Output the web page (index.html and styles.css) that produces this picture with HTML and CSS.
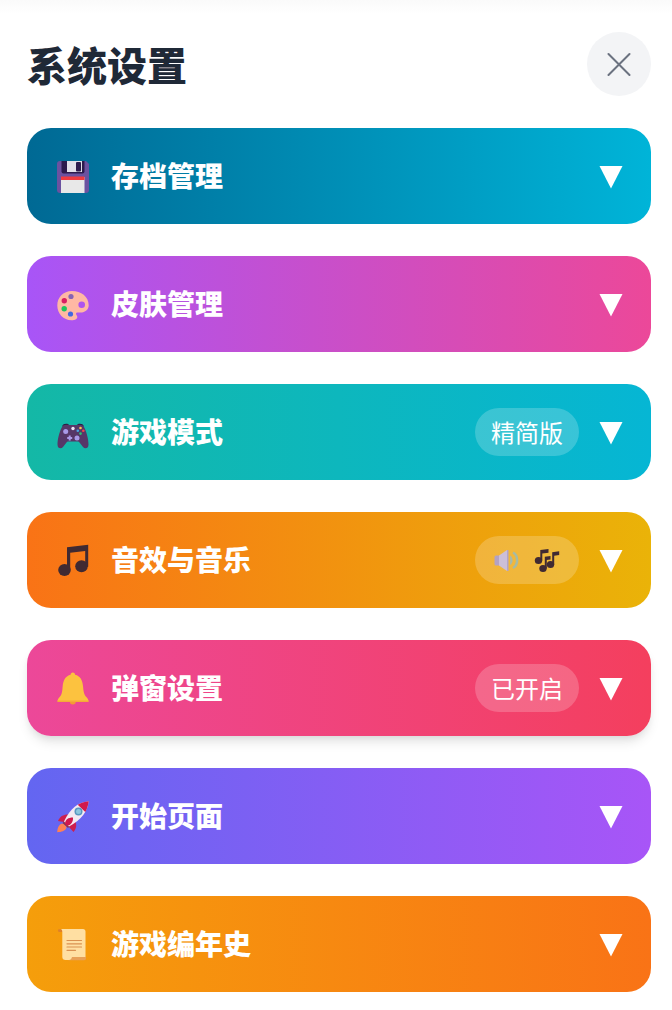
FILE: index.html
```html
<!DOCTYPE html>
<html lang="zh-CN">
<head>
    <meta charset="UTF-8">
    <meta name="viewport" content="width=device-width, initial-scale=1.0">
    <title>系统设置</title>
    <link rel="stylesheet" href="styles.css">
</head>
<body>
    <main class="settings">
        <header class="settings-header">
            <h1>系统设置</h1>
            <button class="close-btn" type="button" aria-label="关闭">
                <svg viewBox="0 0 24 24"><path d="M1.500 2L22.500 23M22.500 2L1.500 23"/></svg>
            </button>
        </header>

        <div class="menu">
            <!-- 存档管理 -->
            <button class="menu-item save" type="button">
                <svg class="icon" viewBox="0 0 36 36">
                    <path fill="#6b52a0" d="M5 3h26l3 3v26a3 3 0 0 1-3 3H5a3 3 0 0 1-3-3V6a3 3 0 0 1 3-3z"/>
                    <path fill="#2c1a4d" d="M6.500 3h23v10.500a2 2 0 0 1-2 2h-19a2 2 0 0 1-2-2z"/>
                    <path fill="#e2e0ea" d="M12 3h15v11H12z"/>
                    <rect fill="#2c1a4d" x="21" y="4" width="5" height="9.500" rx="1"/>
                    <path fill="#e8e8e8" d="M6 19h23.500v16H6z"/>
                    <path fill="#f03a3f" d="M6 18.500h23.500V22H6z"/>
                </svg>
                <span class="label">存档管理</span>
                <svg class="arrow" viewBox="0 0 24 24"><path d="M.5 2h23L12 24.500z"/></svg>
            </button>

            <!-- 皮肤管理 -->
            <button class="menu-item skin" type="button">
                <svg class="icon" viewBox="0 0 36 36">
                    <path fill="#ffb8a4" fill-rule="evenodd" d="M17 5C8 5 2.300 11.500 2.300 19.500S8.500 34.300 16.500 34.300c3.800 0 6-1.500 5.800-3.500-.1-1.300-1.300-1.800-1.300-3 0-1.300 1.200-1.500 3-1.300 5.500.7 9.700-2.500 9.700-7.200C33.700 10.500 26 5 17 5zm9.700 10.400a3.300 3.300 0 1 1 0 6.600 3.300 3.300 0 0 1 0-6.600z"/>
                    <circle cx="16" cy="10.500" r="2.600" fill="#8763b5"/>
                    <circle cx="9.300" cy="14.800" r="2.700" fill="#d91e63"/>
                    <circle cx="9.200" cy="22.800" r="2.700" fill="#1cc65c"/>
                    <circle cx="15.500" cy="28" r="2.600" fill="#4067e0"/>
                </svg>
                <span class="label">皮肤管理</span>
                <svg class="arrow" viewBox="0 0 24 24"><path d="M.5 2h23L12 24.500z"/></svg>
            </button>

            <!-- 游戏模式 -->
            <button class="menu-item mode" type="button">
                <svg class="icon" viewBox="0 0 36 36">
                    <path fill="#281b42" d="M7 12.500C8 10 10 9.500 13 10l1 1h8l1-1c3-.5 5 0 6 2.500z"/>
                    <path fill="#563768" d="M8 11.500c2-1 4-.9 6-.5h8c2-.4 4-.5 6 .5 3 4 5.500 13 5.500 19 0 4-3.500 5-5.500 2.500l-3.500-4.500c-.6-.7-1-1-2-1h-9c-1 0-1.400.3-2 1L8 33c-2 2.500-5.500 1.500-5.500-2.500 0-6 2.500-15 5.500-19z"/>
                    <g fill="#a99ae8">
                        <circle cx="10.700" cy="17.500" r="2.500"/>
                        <circle cx="22" cy="24" r="2.500"/>
                        <path d="M13.700 21.500h2v1.500h1.500v2h-1.500v1.500h-2V25h-1.500v-2h1.500z"/>
                    </g>
                    <circle cx="18" cy="14.500" r="1.700" fill="#eee5f5"/>
                    <circle cx="25.500" cy="14" r="1.300" fill="#f6c64b"/>
                    <circle cx="22.800" cy="16.800" r="1.300" fill="#45a6e8"/>
                    <circle cx="28.300" cy="16.800" r="1.300" fill="#f1434c"/>
                    <circle cx="25.500" cy="19.600" r="1.300" fill="#29c76f"/>
                </svg>
                <span class="label">游戏模式</span>
                <span class="badge">精简版</span>
                <svg class="arrow" viewBox="0 0 24 24"><path d="M.5 2h23L12 24.500z"/></svg>
            </button>

            <!-- 音效与音乐 -->
            <button class="menu-item sound" type="button">
                <svg class="icon" viewBox="0 0 36 36">
                    <g fill="#402a32">
                        <ellipse cx="9.500" cy="28" rx="6.300" ry="6"/>
                        <ellipse cx="26.500" cy="24.300" rx="6.300" ry="6"/>
                        <path d="M12 5.300L33.200 2.700v22h-3V9l-15 1.800V28H12z"/>
                    </g>
                </svg>
                <span class="label">音效与音乐</span>
                <span class="badge badge-icons">
                    <svg viewBox="0 0 28 28">
                        <path fill="#b3a2c4" d="M3 9.500h4.500v10H3a1.500 1.500 0 0 1-1.500-1.500v-7A1.500 1.500 0 0 1 3 9.500z"/>
                        <path fill="#ccbfd8" d="M6 9.500l8-5.500v21l-8-5.500z"/>
                        <path fill="#b2a4c9" d="M14 4h1.500v21H14z"/>
                        <path fill="#aab9a6" d="M17 9.500c3.500 1.500 3.500 8 0 9.500z"/>
                        <path fill="none" stroke="#a6bba3" stroke-width="2.500" d="M20 6.500c5.500 3 5.500 12.500 0 15.500"/>
                    </svg>
                    <svg viewBox="0 0 28 28">
                        <g fill="#402a32">
                            <ellipse cx="5.500" cy="14.500" rx="3.700" ry="3.500"/>
                            <ellipse cx="17.500" cy="18.500" rx="3.700" ry="3.500"/>
                            <ellipse cx="10" cy="22.500" rx="3.700" ry="3.500"/>
                            <path d="M7.300 4l8.200-1v3.700L9.300 7.500v7h-2z"/>
                            <path d="M11.800 10.800l5.700-.8v3.500l-3.700.5v8.500h-2z"/>
                            <path d="M19.200 6.200l7-.9V9l-5 .7v9h-2z"/>
                        </g>
                    </svg>
                </span>
                <svg class="arrow" viewBox="0 0 24 24"><path d="M.5 2h23L12 24.500z"/></svg>
            </button>

            <!-- 弹窗设置 -->
            <button class="menu-item popup" type="button">
                <svg class="icon" viewBox="0 0 36 36">
                    <circle cx="17.800" cy="31.500" r="3" fill="#f49a35"/>
                    <path fill="#fcc23f" d="M17.800 2.500c1.500 0 2.200 1 2.300 2.200 5 1.200 7.400 5.300 7.900 11.300.5 6 1 9 3.800 11.500 1.200 1.200 1.700 2.500 1.700 4H2.500c0-1.500.5-2.800 1.700-4C7 25 7.200 22 7.700 16c.5-6 3-10.100 7.900-11.300.1-1.200.8-2.200 2.200-2.200z"/>
                    <path fill="#f5aa38" d="M2.500 30.500h31v1.500h-31z"/>
                </svg>
                <span class="label">弹窗设置</span>
                <span class="badge">已开启</span>
                <svg class="arrow" viewBox="0 0 24 24"><path d="M.5 2h23L12 24.500z"/></svg>
            </button>

            <!-- 开始页面 -->
            <button class="menu-item start" type="button">
                <svg class="icon" viewBox="0 0 36 36">
                    <path fill="#ff8055" d="M7 25.500c3 .3 4.500 2 4.500 4.500-1.500 3-5 4-9.300 4.200.2-4 1.500-7.500 4.800-8.700z"/>
                    <path fill="#cc1e4f" d="M14 16.500c-5-.5-9 1.500-11 6.500l6 1 5 5 4.500 5c3-3.500 3.500-7 1.500-12z"/>
                    <path fill="#873454" d="M7.500 25l2.500-2.500 5.500 5L13 30z"/>
                    <path fill="#f4eaf3" d="M33.700 3.300C23 4.500 15.500 10 9 23.500l5 5C27 21.500 32.500 13.500 33.700 3.300z"/>
                    <path fill="#d0194e" d="M33.700 3.300c-4.200.4-8 1.600-11 3.500l7.600 7.200c1.900-3.300 3-6.800 3.400-10.700zM10 25.500c.5-4 3-6 8-6 .4 4-2 7.700-6 8.500z"/>
                    <circle cx="23.500" cy="13.500" r="4" fill="#5998c1"/>
                    <circle cx="23.500" cy="13.500" r="2.500" fill="#8bc8df"/>
                </svg>
                <span class="label">开始页面</span>
                <svg class="arrow" viewBox="0 0 24 24"><path d="M.5 2h23L12 24.500z"/></svg>
            </button>

            <!-- 游戏编年史 -->
            <button class="menu-item history" type="button">
                <svg class="icon" viewBox="0 0 36 36">
                    <path fill="#df8129" d="M4 3.200h6V6H4.500C2.500 6 2.500 3.200 4 3.200z"/>
                    <path fill="#ffdfa2" d="M6 3h22c1.500 0 2.500 1 2.500 2.500v26L29 34H10.500c-2 0-3.200-1-3.200-3V6C7.300 4.500 7 3.500 6 3z"/>
                    <path fill="#e8a057" d="M17 31h14c.5 2-.5 3.300-2 3.300H12.500c2.500 0 4-1 4.500-3.300z"/>
                    <path fill="none" stroke="#da9151" stroke-width="1.200" stroke-linecap="round" d="M12 14.500h14.500M12 17.800h14.500M12 21h14.500M12 24.300h8.500"/>
                </svg>
                <span class="label">游戏编年史</span>
                <svg class="arrow" viewBox="0 0 24 24"><path d="M.5 2h23L12 24.500z"/></svg>
            </button>
        </div>
    </main>
</body>
</html>
```

FILE: styles.css
```css
* {
    box-sizing: border-box;
}
body {
    margin: 0;
    font-family: "Noto Sans CJK SC", sans-serif;
    background: #fff linear-gradient(#fafafa, #fff) top / 100% 14px no-repeat;
}
.settings {
    padding: 32px 21px 18px 27px;
}
.settings-header {
    display: flex;
    justify-content: space-between;
    align-items: center;
    margin-bottom: 32px;
}
h1 {
    margin: 0;
    font-size: 40px;
    line-height: 62px;
    font-weight: 900;
    color: #1f2937;
}
button {
    font-family: inherit;
    border: none;
    cursor: pointer;
}
svg {
    display: block;
    flex-shrink: 0;
}
.close-btn {
    display: flex;
    align-items: center;
    justify-content: center;
    width: 64px;
    height: 64px;
    padding: 0;
    border-radius: 50%;
    background: #f3f4f6;
}
.close-btn svg {
    width: 24px;
    height: 24px;
    fill: none;
    stroke: #6b7280;
    stroke-width: 2;
    stroke-linecap: round;
}
.menu {
    display: flex;
    flex-direction: column;
    gap: 32px;
}
.menu-item {
    display: flex;
    align-items: center;
    gap: 20px;
    width: 100%;
    height: 96px;
    padding: 0 28px;
    border-radius: 24px;
    color: #fff;
    text-align: left;
}
.icon {
    width: 36px;
    height: 36px;
}
.label {
    flex: 1;
    padding-bottom: 2px;
    font-size: 28px;
    line-height: 40px;
    font-weight: 900;
}
.arrow {
    width: 24px;
    height: 24px;
    fill: #fff;
    overflow: visible;
}
.badge {
    display: flex;
    align-items: center;
    height: 48px;
    padding: 0 16px 2px;
    border-radius: 24px;
    font-size: 24px;
    background: rgba(255, 255, 255, 0.2);
}
.badge-icons {
    gap: 12px;
    padding: 0 18px;
}
.badge-icons svg {
    width: 28px;
    height: 28px;
}
.save {
    background: linear-gradient(to right, #006994, #00b4d8);
}
.skin {
    background: linear-gradient(to right, #a855f7, #ec4899);
}
.mode {
    background: linear-gradient(to right, #14b8a6, #06b6d4);
}
.sound {
    background: linear-gradient(to right, #f97316, #eab308);
}
.popup {
    background: linear-gradient(to right, #ec4899, #f43f5e);
    box-shadow: 0 8px 12px -2px rgba(0, 0, 0, 0.1), 0 4px 8px -4px rgba(0, 0, 0, 0.1);
}
.start {
    background: linear-gradient(to right, #6366f1, #a855f7);
}
.history {
    background: linear-gradient(to right, #f59e0b, #f97316);
}
```
